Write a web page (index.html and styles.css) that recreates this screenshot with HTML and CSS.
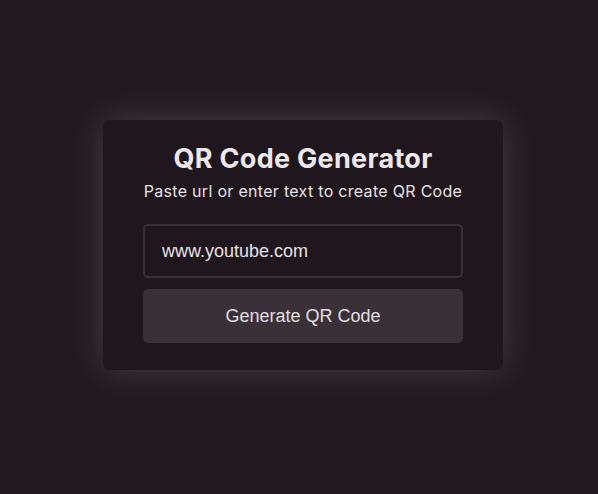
FILE: index.html
```html
<!DOCTYPE html>
<html>
<head>
<meta charset="utf-8">
<link rel="stylesheet" href="styles.css">
</head>
<body>
<main class="page">
  <section class="card">
    <h1 class="title">QR Code Generator</h1>
    <p class="subtitle">Paste url or enter text to create QR Code</p>
    <input class="field" type="text" value="www.youtube.com">
    <button class="btn">Generate QR Code</button>
  </section>
</main>
</body>
</html>
```
FILE: styles.css
```css
* { box-sizing: border-box; }
html, body { margin: 0; height: 100%; }
body {
  background: #231920;
  font-family: "Liberation Sans", Arial, sans-serif;
}
.page {
  height: 494px;
  display: flex;
  justify-content: center;
  padding-top: 120px;
  padding-left: 8px;
}
.card {
  width: 400px;
  height: 250px;
  background: #20171e;
  border-radius: 7px;
  padding: 24px 40px 0;
  box-shadow: 0 0 35px rgba(255,255,255,0.16);
  display: flex;
  flex-direction: column;
}
.title {
  margin: 0;
  text-align: center;
  font-family: Inter, "Open Sans", sans-serif;
  font-weight: 700;
  font-size: 27px;
  line-height: 30px;
  letter-spacing: 0.3px;
  color: #ece8ec;
}
.subtitle {
  margin: 6px 0 0;
  text-align: center;
  font-family: Inter, "Open Sans", sans-serif;
  font-size: 16px;
  line-height: 22px;
  letter-spacing: 0.3px;
  color: #e6e1e6;
}
.field {
  margin-top: 22px;
  height: 54px;
  width: 100%;
  background: #20171e;
  border: 2px solid #3a3038;
  border-radius: 5px;
  padding: 0 17px;
  font-family: "Liberation Sans", Arial, sans-serif;
  font-size: 18px;
  color: #e6e2e6;
  outline: none;
}
.btn {
  margin-top: 11px;
  height: 54px;
  width: 100%;
  background: #3a3038;
  border: none;
  border-radius: 5px;
  font-family: "Liberation Sans", Arial, sans-serif;
  font-size: 18px;
  color: #e3dfe3;
}
```
